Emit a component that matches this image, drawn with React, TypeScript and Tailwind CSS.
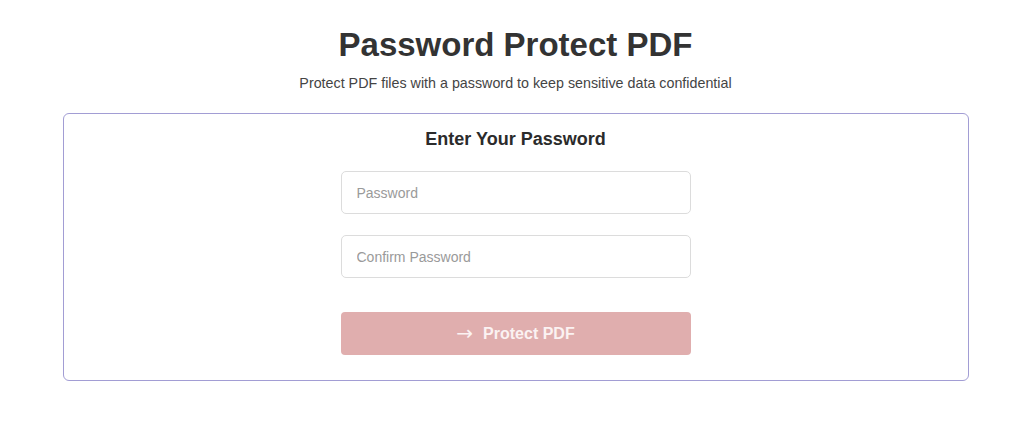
const App = () => {
  return (
    <div className="min-h-screen w-full bg-white pl-[7px] pt-[25px] font-['Liberation_Sans',Arial,sans-serif]">
      <div className="flex flex-col items-center">
        <h1 className="text-[33px] leading-[40px] font-bold text-[#333333]">
          Password Protect PDF
        </h1>
        <p className="mt-[8px] text-[14.3px] leading-[20px] text-[#444444]">
          Protect PDF files with a password to keep sensitive data confidential
        </p>
        <div className="mt-[20px] w-[906px] rounded-[6px] border border-[#a29dd4] pt-[13px] pb-[25px] flex flex-col items-center">
          <h2 className="text-[18px] leading-[24px] font-bold text-[#2b2b2b]">
            Enter Your Password
          </h2>
          <div className="mt-[20px] flex w-[350px] flex-col gap-[21px]">
            <input
              type="password"
              placeholder="Password"
              className="h-[43px] w-full rounded-[5px] border border-[#dcdcdc] px-[15px] text-[14px] text-[#333] placeholder:text-[#9a9a9a] outline-none"
            />
            <input
              type="password"
              placeholder="Confirm Password"
              className="h-[43px] w-full rounded-[5px] border border-[#dcdcdc] px-[15px] text-[14px] text-[#333] placeholder:text-[#9a9a9a] outline-none"
            />
          </div>
          <button className="mt-[34px] flex h-[43px] w-[350px] items-center justify-center gap-[10px] rounded-[4px] bg-[#e0aeae] text-[16px] font-bold text-[#fbf2f2]">
            <span className="text-[20px] leading-none font-normal font-['DejaVu_Sans',sans-serif] -mt-[2px]">→</span>
            <span>Protect PDF</span>
          </button>
        </div>
      </div>
    </div>
  );
};

export default App;
